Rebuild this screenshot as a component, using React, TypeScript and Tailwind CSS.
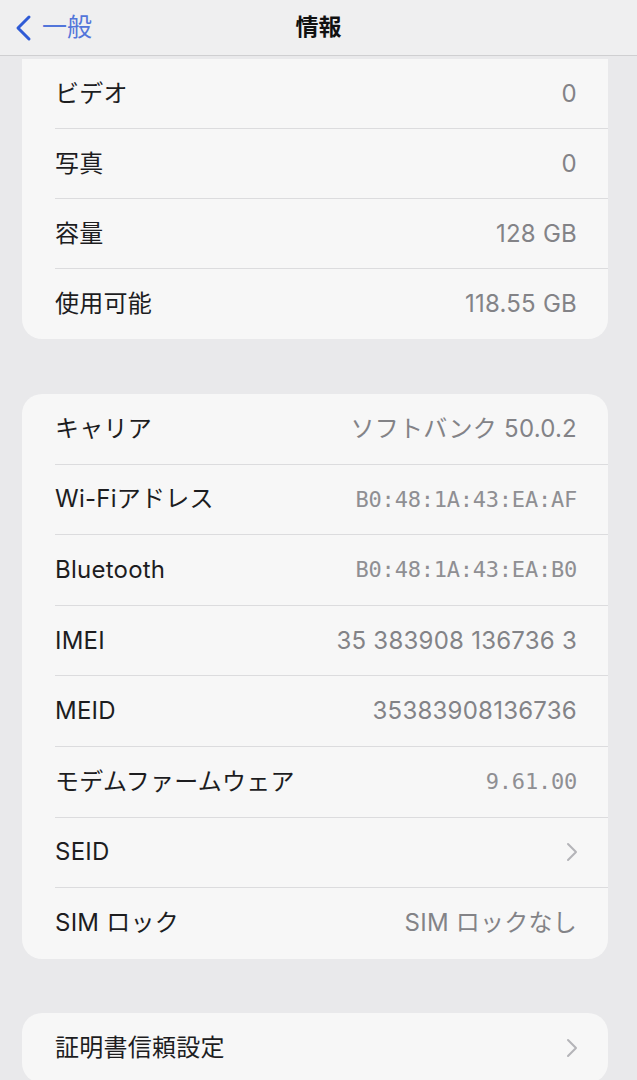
import { ReactNode } from "react";

const sans = "font-['Inter','Noto_Sans_CJK_JP',sans-serif]";
const mono = "font-['DejaVu_Sans_Mono','Noto_Sans_CJK_JP',monospace]";

type Row = { label: string; value?: string; mono?: boolean; chevron?: boolean };

const media: Row[] = [
  { label: "ビデオ", value: "0" },
  { label: "写真", value: "0" },
  { label: "容量", value: "128 GB" },
  { label: "使用可能", value: "118.55 GB" },
];

const network: Row[] = [
  { label: "キャリア", value: "ソフトバンク 50.0.2" },
  { label: "Wi-Fiアドレス", value: "B0:48:1A:43:EA:AF", mono: true },
  { label: "Bluetooth", value: "B0:48:1A:43:EA:B0", mono: true },
  { label: "IMEI", value: "35 383908 136736 3" },
  { label: "MEID", value: "35383908136736" },
  { label: "モデムファームウェア", value: "9.61.00", mono: true },
  { label: "SEID", chevron: true },
  { label: "SIM ロック", value: "SIM ロックなし" },
];

const certs: Row[] = [{ label: "証明書信頼設定", chevron: true }];

function Chevron() {
  return (
    <svg width="12" height="20" viewBox="0 0 12 20" fill="none" className="mr-[-1px]">
      <path d="M2 2l8 8-8 8" stroke="#b4b4b8" strokeWidth="2" strokeLinecap="round" strokeLinejoin="round" />
    </svg>
  );
}

function Group({ rows, h, top = true }: { rows: Row[]; h: string; top?: boolean }) {
  return (
    <div className={`ml-[22px] mr-[29px] bg-[#f7f7f7] ${top ? "rounded-[20px]" : "rounded-b-[20px]"}`}>
      {rows.map((r, i) => (
        <div key={r.label} className={`pl-[33px] ${h}`}>
          <div
            className={`flex h-full items-center justify-between pr-[31px] ${
              i < rows.length - 1 ? "border-b border-[#dcdcde]" : ""
            }`}
          >
            <span className="text-[24px] tracking-[0.01em] text-[#1d1d1f]">{r.label}</span>
            {r.chevron ? (
              <Chevron />
            ) : (
              <span
                className={
                  r.mono
                    ? `${mono} text-[22px] tracking-[-0.01em] text-[#8f8f93]`
                    : "text-[24px] tracking-[0.01em] text-[#838387]"
                }
              >
                {r.value}
              </span>
            )}
          </div>
        </div>
      ))}
    </div>
  );
}

function Section({ children, className = "" }: { children: ReactNode; className?: string }) {
  return <div className={className}>{children}</div>;
}

export default function App() {
  return (
    <div className={`${sans} h-[1080px] w-[637px] overflow-hidden bg-[#e9e9eb]`}>
      {/* nav bar */}
      <div className="relative flex h-[56px] items-center border-b border-[#cfcfd1] bg-[#efeff0]">
        <div className="flex items-center pl-[14px]">
          <svg width="20" height="28" viewBox="0 0 20 28" fill="none">
            <path d="M15 3L4 14l11 11" stroke="#2f5bd6" strokeWidth="3" strokeLinecap="round" strokeLinejoin="round" />
          </svg>
          <span className="ml-[8px] text-[25px] text-[#5275da]">一般</span>
        </div>
        <span className="absolute left-1/2 -translate-x-1/2 text-[23px] font-bold text-[#111]">情報</span>
      </div>

      <Section className="pt-[3px]">
        <Group rows={media} h="h-[70px]" top={false} />
      </Section>

      <Section className="pt-[55px]">
        <Group rows={network} h="h-[70.6px]" />
      </Section>

      <Section className="pt-[54px]">
        <Group rows={certs} h="h-[70px]" />
      </Section>
    </div>
  );
}
